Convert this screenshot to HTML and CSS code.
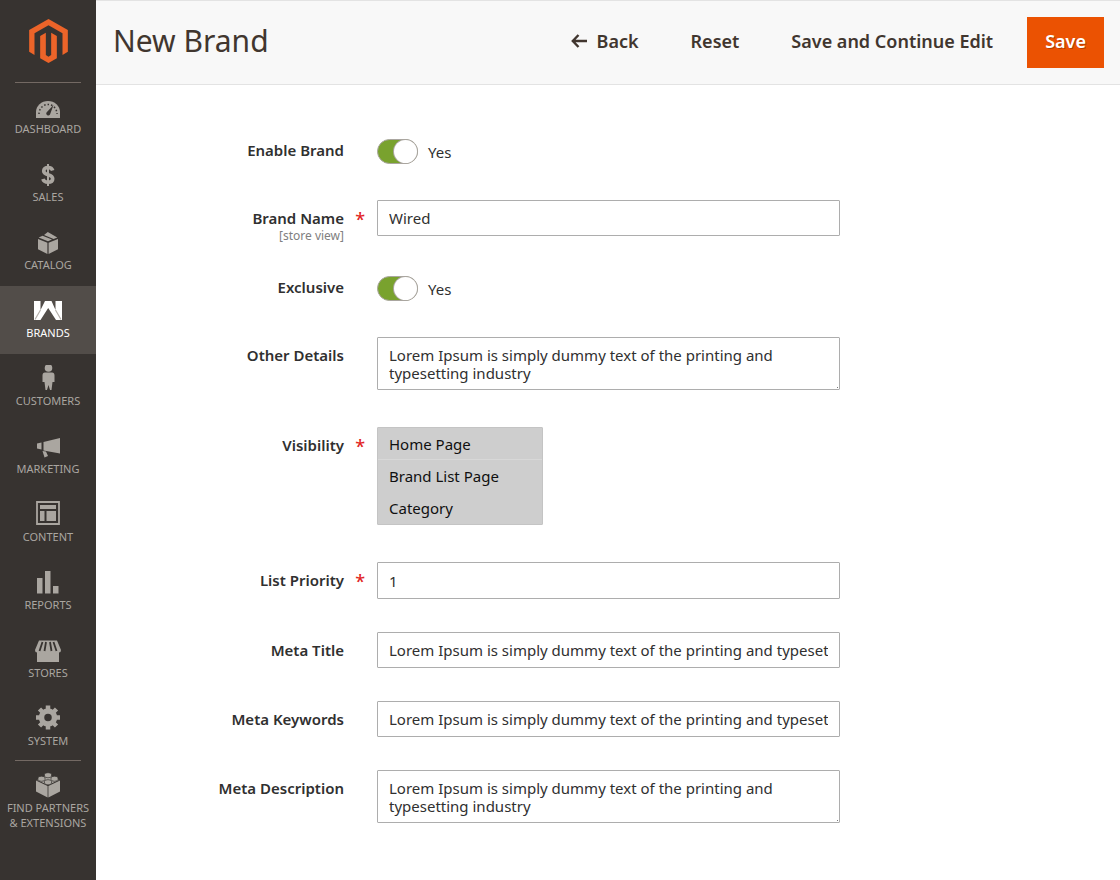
FILE: index.html
```html
<!DOCTYPE html>
<html lang="en">
<head>
<meta charset="utf-8">
<meta name="viewport" content="width=device-width, initial-scale=1">
<title>New Brand</title>
<link rel="stylesheet" href="styles.css">
</head>
<body class="admin">
<aside class="sidebar">
  <a class="logo" href="#" aria-label="Magento Admin">
    <svg width="39" height="44" viewBox="88 57 116 132"><path fill="#ec6429" d="M146 57 204 90V155L188 165V100L146 76 104 100V165L88 155V90ZM121 108 138 98V165L146 170 154 165V98L171 108V175L146 189 121 175Z"/></svg>
  </a>
  <nav class="menu" aria-label="Main">
    <a class="menu-item" href="#">
      <svg class="icon" viewBox="0 0 26 26"><path fill="currentColor" d="M1 25V19a12 11 0 0 1 24 0V25Z"/><path class="cut" stroke-width="1.500" stroke-dasharray="1.500 2" d="M4 21a9 9.500 0 0 1 18 0"/><path class="hole" d="M18.500 12 15 21.500A2 2 0 1 1 11.500 19.500Z"/></svg>
      <span>DASHBOARD</span>
    </a>
    <a class="menu-item" href="#">
      <svg class="icon" viewBox="0 0 26 26"><path class="line" stroke-width="3.600" d="M17.700 9.500C17 7 15.500 6.500 13 6.500 10.400 6.500 8.700 8 8.700 10 8.700 15 17.700 12.400 17.700 17.800 17.700 20 15.900 21.200 13 21.200 10 21.200 8.500 20 7.900 18"/><path class="line" stroke-width="2" d="M13 3V25"/></svg>
      <span>SALES</span>
    </a>
    <a class="menu-item" href="#">
      <svg class="icon" viewBox="0 0 26 26"><path fill="currentColor" d="M3 10 12.400 13.800V25L3 20.200ZM23 10 13.600 13.800V25L23 20.200ZM3.600 8.500 7.600 6.700 17 10.600 13 12.300ZM9 6 12.800 3 22.300 8.400 18.600 10Z"/></svg>
      <span>CATALOG</span>
    </a>
    <a class="menu-item active" href="#" aria-current="page">
      <svg class="icon brand-icon" viewBox="0 0 28 26"><path fill="#fff" d="M0 4H6.500V13L11 4H17.500L21.500 13V4H28V23H22L14.200 11 6.500 23H0Z"/><path fill="none" stroke="#b5b0ab" stroke-width="1.200" d="M6.500 13 1 22.500M21.500 13 27 22.500"/></svg>
      <span>BRANDS</span>
    </a>
    <a class="menu-item" href="#">
      <svg class="icon" viewBox="0 0 26 26"><circle fill="currentColor" cx="13.500" cy="3" r="3.800"/><path fill="currentColor" d="M10 7.500H17Q19.500 7.500 19.500 10.500V17H17.500L16.500 25H15L13.500 20 12 25H10.500L9.500 17H7.500V10.500Q7.500 7.500 10 7.500Z"/></svg>
      <span>CUSTOMERS</span>
    </a>
    <a class="menu-item" href="#">
      <svg class="icon" viewBox="0 0 26 26"><path fill="currentColor" d="M25 5V20.500L8.500 17.500V9ZM2 10.500 6.500 9.500V16.500L2 15.500ZM7.500 18 11 18.600 13 23 9.500 24.500Z"/></svg>
      <span>MARKETING</span>
    </a>
    <a class="menu-item" href="#">
      <svg class="icon" viewBox="0 0 26 26"><path class="line" stroke-width="1.800" d="M2 1H24V23H2Z"/><path fill="currentColor" d="M5 4H21V8H5ZM5 10H9.500V20H5ZM11.500 10H21V20H11.500Z"/></svg>
      <span>CONTENT</span>
    </a>
    <a class="menu-item" href="#">
      <svg class="icon" viewBox="0 0 26 26"><path fill="currentColor" d="M2 9H7.500V24.500H2ZM10 2H15.500V24.500H10ZM18 17H23.500V24.500H18Z"/></svg>
      <span>REPORTS</span>
    </a>
    <a class="menu-item" href="#">
      <svg class="icon" viewBox="0 0 26 26"><path fill="currentColor" d="M2 15H24V25H2ZM4 3.500H22L26 13Q26 15.500 24 15.500H2Q0 15.500 0 13Z"/><path class="cut" stroke-width="1.800" d="M7.500 5 4.500 14M11 5 9.500 14M15 5 16.500 14M18.500 5 21.500 14"/></svg>
      <span>STORES</span>
    </a>
    <a class="menu-item" href="#">
      <svg class="icon" viewBox="0 0 26 26"><circle class="line" cx="13" cy="12.500" r="6.500" stroke-width="5.500"/><path class="line" stroke-width="4.500" d="M13 .5V4.500M13 20.500V24.500M1 12.500H5M21 12.500H25M4.500 4 7.500 7M18.500 18 21.500 21M4.500 21 7.500 18M18.500 7 21.500 4"/></svg>
      <span>SYSTEM</span>
    </a>
    <a class="menu-item partners" href="#">
      <svg class="icon" viewBox="0 0 26 26"><path fill="currentColor" d="M1 8.500 12.600 14V25.500L1 19.500ZM25 8.500 13.400 14V25.500L25 19.500ZM13 3 24 8 13 13 2 8Z"/><path fill="currentColor" stroke="#373330" stroke-width=".7" d="M9.500 2.500a3.500 1.800 0 0 1 7 0V4a3.500 1.800 0 0 1-7 0ZM3 6a3.500 1.800 0 0 1 7 0V7.500a3.500 1.800 0 0 1-7 0ZM16 6a3.500 1.800 0 0 1 7 0V7.500a3.500 1.800 0 0 1-7 0ZM9.500 9.500a3.500 1.800 0 0 1 7 0V11a3.500 1.800 0 0 1-7 0Z"/></svg>
      <span>FIND PARTNERS<br>&amp; EXTENSIONS</span>
    </a>
  </nav>
</aside>
<main class="page">
  <header class="page-header">
    <h1 class="title">New Brand</h1>
    <div class="actions">
      <button class="action" type="button"><svg width="16" height="14" viewBox="0 0 16 14"><path fill="none" stroke="currentColor" stroke-width="2.400" d="M7.500 1 1.800 7 7.500 13M1.800 7H16"/></svg>Back</button>
      <button class="action" type="button">Reset</button>
      <button class="action" type="submit" form="brand-form">Save and Continue Edit</button>
      <button class="action primary" type="submit" form="brand-form">Save</button>
    </div>
  </header>
  <form class="form" id="brand-form">
    <div class="field">
      <label class="label toggle-label" for="enable">Enable Brand</label>
      <div class="switch"><input class="toggle" type="checkbox" id="enable" checked><label for="enable">Yes</label></div>
    </div>
    <div class="field required">
      <label class="label" for="name">Brand Name<small class="scope">[store view]</small></label>
      <input class="control" type="text" id="name" value="Wired">
    </div>
    <div class="field">
      <label class="label toggle-label" for="exclusive">Exclusive</label>
      <div class="switch"><input class="toggle" type="checkbox" id="exclusive" checked><label for="exclusive">Yes</label></div>
    </div>
    <div class="field tall">
      <label class="label" for="details">Other Details</label>
      <textarea class="control area" id="details" rows="2">Lorem Ipsum is simply dummy text of the printing and typesetting industry</textarea>
    </div>
    <div class="field tall required">
      <label class="label" for="visibility">Visibility</label>
      <select class="control list" id="visibility" multiple size="3">
        <option selected>Home Page</option>
        <option selected>Brand List Page</option>
        <option selected>Category</option>
      </select>
    </div>
    <div class="field required">
      <label class="label" for="priority">List Priority</label>
      <input class="control number" type="text" inputmode="numeric" id="priority" value="1">
    </div>
    <div class="field">
      <label class="label" for="meta-title">Meta Title</label>
      <input class="control" type="text" id="meta-title" value="Lorem Ipsum is simply dummy text of the printing and typesetting industry">
    </div>
    <div class="field">
      <label class="label" for="meta-keywords">Meta Keywords</label>
      <input class="control" type="text" id="meta-keywords" value="Lorem Ipsum is simply dummy text of the printing and typesetting industry">
    </div>
    <div class="field">
      <label class="label" for="meta-description">Meta Description</label>
      <textarea class="control area" id="meta-description" rows="2">Lorem Ipsum is simply dummy text of the printing and typesetting industry</textarea>
    </div>
  </form>
</main>
</body>
</html>
```

FILE: styles.css
```css
* { box-sizing: border-box; }

.admin {
  margin: 0;
  min-height: 100vh;
  display: grid;
  grid-template-columns: 96px minmax(0, 1fr);
  background: #fff;
  color: #303030;
  font: 15px/18px "Noto Sans", sans-serif;
}

/* Sidebar */
.sidebar { background: #373330; }
.logo {
  display: flex;
  justify-content: center;
  height: 82px;
  padding-top: 19px;
}
.menu { position: relative; }
.menu::before,
.partners::before {
  content: "";
  position: absolute;
  top: 0;
  left: 15px;
  right: 15px;
  border-top: 1px solid #736963;
}
.menu-item {
  position: relative;
  display: flex;
  flex-direction: column;
  align-items: center;
  gap: 2px;
  height: 68px;
  padding-top: 11px;
  color: #aaa6a0;
  font-size: 11px;
  line-height: 15px;
  text-align: center;
  text-decoration: none;
  white-space: nowrap;
}
.menu-item.active { background: #524d49; color: #fff; }
.menu-item.partners { height: auto; padding-top: 10px; }
.partners::before { top: -2px; }
.icon { display: block; width: 26px; height: 26px; flex: none; }
.brand-icon { width: 28px; }
.line { fill: none; stroke: currentColor; }
.cut { fill: none; stroke: #373330; }
.hole { fill: #373330; }

/* Header */
.page-header {
  display: flex;
  align-items: center;
  justify-content: space-between;
  height: 85px;
  padding: 0 16px 0 17px;
  background: #f8f8f8;
  border-top: 1px solid #e3e3e3;
  border-bottom: 1px solid #e3e3e3;
}
.title {
  margin: 0;
  padding-bottom: 3px;
  color: #41362f;
  font-size: 30px;
  font-weight: 400;
  line-height: 40px;
}
.actions { display: flex; gap: 16px; }
.action {
  display: flex;
  align-items: center;
  gap: 10px;
  height: 51px;
  padding: 0 18px 3px;
  border: 0;
  background: none;
  color: #41362f;
  font: 600 18px/24px "Noto Sans", sans-serif;
}
.action.primary {
  background: #eb5202;
  color: #fff;
  text-shadow: 1px 1px 0 rgba(0, 0, 0, .25);
}

/* Form */
.form {
  display: flex;
  flex-direction: column;
  gap: 33px;
  padding: 48px 0;
}
.field {
  display: grid;
  grid-template-columns: 281fr 463fr 280fr;
  align-items: start;
}
.field.tall { padding-bottom: 4px; }
.label {
  position: relative;
  padding: 9px 33px 0 0;
  font-weight: 600;
  text-align: right;
}
.toggle-label { padding-top: 8px; }
.required .label::after {
  content: "*";
  position: absolute;
  top: 10px;
  right: 12px;
  color: #e22626;
  font-size: 18px;
  font-weight: 500;
}
.scope {
  display: block;
  margin-bottom: -8px;
  color: #808080;
  font-size: 12px;
  font-weight: 400;
}
.switch {
  display: flex;
  align-items: center;
  gap: 10px;
  height: 34px;
  padding-top: 3px;
}
.toggle {
  appearance: none;
  display: flex;
  justify-content: flex-end;
  width: 41px;
  height: 25px;
  margin: 0;
  border: 1px solid #aaa6a0;
  border-radius: 13px;
  background: #79a22e;
}
.toggle::before {
  content: "";
  width: 23px;
  border-radius: 50%;
  background: #fff;
  box-shadow: 0 0 0 1px #aaa6a0;
}
.toggle:not(:checked) { justify-content: flex-start; background: #fff; }
.control {
  display: block;
  width: 100%;
  height: 36px;
  margin: 0;
  padding: 0 11px;
  border: 1px solid #adadad;
  border-radius: 1px;
  background: #fff;
  color: #303030;
  font: 15px/18px "Noto Sans", sans-serif;
}
.number { height: 37px; }
.area {
  height: 53px;
  padding: 8px 11px 6px;
  background: linear-gradient(#777, #777) right 1px bottom 1px / 1px 1px no-repeat #fff;
  overflow: hidden;
  resize: none;
}
.list {
  width: 166px;
  height: 98px;
  padding: 0;
  overflow: auto;
  border-color: #c4c4c4;
  background: #cecece;
}
.list option { padding: 6px 11px; min-height: 32px; }
.list option:first-child { border-bottom: 1px solid #d8d8d8; padding-bottom: 5px; }
```
